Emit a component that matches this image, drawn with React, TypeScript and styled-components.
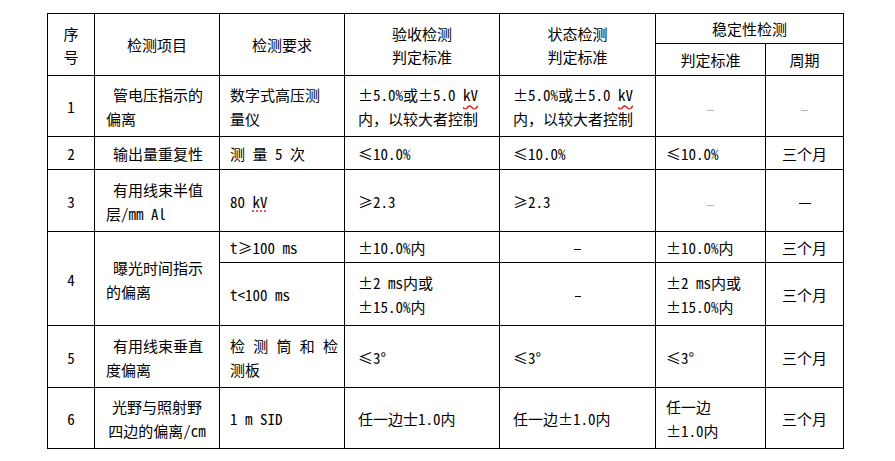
import React from "react";
import styled, { createGlobalStyle } from "styled-components";

const Global = createGlobalStyle`
  html, body { margin: 0; padding: 0; background: #ffffff; }
  body {
    font-family: "Noto Sans Mono CJK SC", "Noto Sans CJK SC", "DejaVu Sans", sans-serif;
    color: #000;
  }
`;

const Page = styled.div`
  padding: 13px 0 0 47px;
`;

const Table = styled.table`
  border-collapse: collapse;
  table-layout: fixed;
  width: 797px;
  font-size: 15px;
  line-height: 24px;
`;

const Row = styled.tr<{ $h: number }>`
  height: ${(p) => p.$h}px;
`;

const HeadCell = styled.th<{ $lh?: number }>`
  border: 1px solid #000;
  font-weight: normal;
  text-align: center;
  vertical-align: middle;
  padding: 0;
  line-height: ${(p) => p.$lh ?? 24}px;
`;

const IndexCell = styled.td`
  border: 1px solid #000;
  text-align: center;
  vertical-align: middle;
  padding: 2px 0 0;
`;

const ItemCell = styled.td<{ $centered?: boolean }>`
  border: 1px solid #000;
  vertical-align: middle;
  padding: 2px 4px 0 ${(p) => (p.$centered ? 4 : 11)}px;
  text-align: ${(p) => (p.$centered ? "center" : "left")};
  text-indent: ${(p) => (p.$centered ? 0 : 7)}px;
`;

const ValueCell = styled.td<{ $pl?: number; $center?: boolean }>`
  border: 1px solid #000;
  vertical-align: middle;
  padding: 2px 4px 0 ${(p) => (p.$center ? 4 : p.$pl ?? 13)}px;
  text-align: ${(p) => (p.$center ? "center" : "left")};
  white-space: nowrap;
`;

const SpreadLine = styled.span`
  display: block;
  text-align: justify;
  text-align-last: justify;
  margin-right: 2px;
`;

const Dash = styled.span<{ $muted?: boolean; $w: number }>`
  display: inline-block;
  width: ${(p) => p.$w}px;
  height: 1px;
  background: ${(p) => (p.$muted ? "#b3b3b3" : "#000")};
  vertical-align: middle;
  position: relative;
  top: ${(p) => (p.$muted ? 2 : 0)}px;
`;

const Kv = styled.span<{ $style: "wavy" | "dotted" }>`
  text-decoration-line: underline;
  text-decoration-style: ${(p) => p.$style};
  text-decoration-color: #e02020;
  text-underline-offset: 3px;
`;

export default function App() {
  return (
    <>
      <Global />
      <Page>
        <Table>
          <colgroup>
            <col style={{ width: 47 }} />
            <col style={{ width: 125 }} />
            <col style={{ width: 125 }} />
            <col style={{ width: 155 }} />
            <col style={{ width: 156 }} />
            <col style={{ width: 110 }} />
            <col style={{ width: 78 }} />
          </colgroup>
          <thead>
            <Row $h={30}>
              <HeadCell rowSpan={2} $lh={23}>
                序
                <br />号
              </HeadCell>
              <HeadCell rowSpan={2}>检测项目</HeadCell>
              <HeadCell rowSpan={2}>检测要求</HeadCell>
              <HeadCell rowSpan={2} $lh={23}>
                验收检测
                <br />
                判定标准
              </HeadCell>
              <HeadCell rowSpan={2} $lh={23}>
                状态检测
                <br />
                判定标准
              </HeadCell>
              <HeadCell colSpan={2}>稳定性检测</HeadCell>
            </Row>
            <Row $h={32}>
              <HeadCell>判定标准</HeadCell>
              <HeadCell>周期</HeadCell>
            </Row>
          </thead>
          <tbody>
            <Row $h={61}>
              <IndexCell>1</IndexCell>
              <ItemCell>
                管电压指示的
                <br />
                偏离
              </ItemCell>
              <ValueCell $pl={10}>
                数字式高压测
                <br />
                量仪
              </ValueCell>
              <ValueCell>
                ±5.0%或±5.0 <Kv $style="wavy">kV</Kv>
                <br />
                内，以较大者控制
              </ValueCell>
              <ValueCell>
                ±5.0%或±5.0 <Kv $style="wavy">kV</Kv>
                <br />
                内，以较大者控制
              </ValueCell>
              <ValueCell $center>
                <Dash $muted $w={7} />
              </ValueCell>
              <ValueCell $center>
                <Dash $muted $w={7} />
              </ValueCell>
            </Row>
            <Row $h={33}>
              <IndexCell>2</IndexCell>
              <ItemCell>输出量重复性</ItemCell>
              <ValueCell $pl={10}>测 量 5 次</ValueCell>
              <ValueCell>≤10.0%</ValueCell>
              <ValueCell>≤10.0%</ValueCell>
              <ValueCell $pl={10}>≤10.0%</ValueCell>
              <ValueCell $center>三个月</ValueCell>
            </Row>
            <Row $h={62}>
              <IndexCell>3</IndexCell>
              <ItemCell>
                有用线束半值
                <br />
                层/mm Al
              </ItemCell>
              <ValueCell $pl={10}>
                80 <Kv $style="dotted">kV</Kv>
              </ValueCell>
              <ValueCell>≥2.3</ValueCell>
              <ValueCell>≥2.3</ValueCell>
              <ValueCell $center>
                <Dash $muted $w={7} />
              </ValueCell>
              <ValueCell $center>
                <Dash $w={12} />
              </ValueCell>
            </Row>
            <Row $h={31}>
              <IndexCell rowSpan={2}>4</IndexCell>
              <ItemCell rowSpan={2}>
                曝光时间指示
                <br />
                的偏离
              </ItemCell>
              <ValueCell $pl={10}>t≥100 ms</ValueCell>
              <ValueCell>±10.0%内</ValueCell>
              <ValueCell $center>
                <Dash $w={7} />
              </ValueCell>
              <ValueCell $pl={10}>±10.0%内</ValueCell>
              <ValueCell $center>三个月</ValueCell>
            </Row>
            <Row $h={63}>
              <ValueCell $pl={10}>t&lt;100 ms</ValueCell>
              <ValueCell>
                ±2 ms内或
                <br />
                ±15.0%内
              </ValueCell>
              <ValueCell $center>
                <Dash $w={6} />
              </ValueCell>
              <ValueCell $pl={10}>
                ±2 ms内或
                <br />
                ±15.0%内
              </ValueCell>
              <ValueCell $center>三个月</ValueCell>
            </Row>
            <Row $h={62}>
              <IndexCell>5</IndexCell>
              <ItemCell>
                有用线束垂直
                <br />
                度偏离
              </ItemCell>
              <ValueCell $pl={10}>
                <SpreadLine>检 测 筒 和 检</SpreadLine>
                测板
              </ValueCell>
              <ValueCell>≤3°</ValueCell>
              <ValueCell>≤3°</ValueCell>
              <ValueCell $pl={10}>≤3°</ValueCell>
              <ValueCell $center>三个月</ValueCell>
            </Row>
            <Row $h={61}>
              <IndexCell>6</IndexCell>
              <ItemCell $centered>
                光野与照射野
                <br />
                四边的偏离/cm
              </ItemCell>
              <ValueCell $pl={10}>1 m SID</ValueCell>
              <ValueCell>任一边士1.0内</ValueCell>
              <ValueCell>任一边±1.0内</ValueCell>
              <ValueCell $pl={10}>
                任一边
                <br />
                ±1.0内
              </ValueCell>
              <ValueCell $center>三个月</ValueCell>
            </Row>
          </tbody>
        </Table>
      </Page>
    </>
  );
}
